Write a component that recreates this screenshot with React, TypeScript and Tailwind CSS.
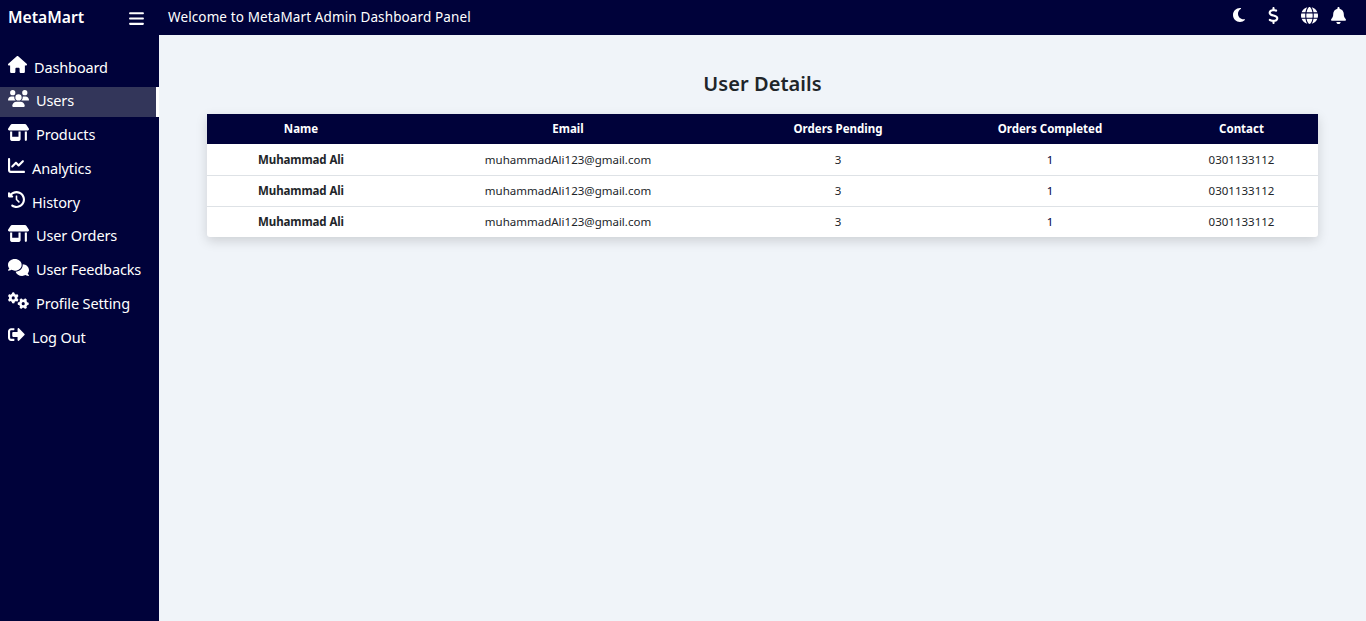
import { FaHouse, FaUsers, FaShop, FaChartLine, FaClockRotateLeft, FaComments, FaGears, FaMoon, FaDollarSign, FaGlobe, FaBell, FaBars } from "react-icons/fa6";
import { FaSignOutAlt } from "react-icons/fa";

const nav = [
  { label: "Dashboard", Icon: FaHouse, size: 19, gap: "gap-[7px]" },
  { label: "Users", Icon: FaUsers, size: 21, gap: "gap-[7px]", active: true },
  { label: "Products", Icon: FaShop, size: 21, gap: "gap-[7px]" },
  { label: "Analytics", Icon: FaChartLine, size: 17, gap: "gap-[7px]" },
  { label: "History", Icon: FaClockRotateLeft, size: 17, gap: "gap-[7px]" },
  { label: "User Orders", Icon: FaShop, size: 21, gap: "gap-[7px]" },
  { label: "User Feedbacks", Icon: FaComments, size: 21, gap: "gap-[7px]" },
  { label: "Profile Setting", Icon: FaGears, size: 21, gap: "gap-[7px]" },
  { label: "Log Out", Icon: FaSignOutAlt, size: 17, gap: "gap-[7px]" },
];

const rows = [0, 1, 2];

export default function App() {
  return (
    <div className="flex h-[621px] w-[1366px] overflow-hidden bg-[#f0f4f9] font-['Noto_Sans',sans-serif] text-[#212529]">
      <aside className="flex h-full w-[159px] shrink-0 flex-col bg-[#00023a] text-white">
        <div className="flex h-[36px] items-center justify-between pl-2 pr-[14px]">
          <span className="text-[15.7px] font-semibold">MetaMart</span>
          <FaBars size={17} />
        </div>
        <nav className="mt-[17px] flex flex-col">
          {nav.map(({ label, Icon, size, gap, active }) => (
            <div
              key={label}
              className={`mb-[3.75px] flex h-[30px] items-center pl-2 ${gap} ${active ? "border-r-[3px] border-white bg-[#33365a]" : ""}`}
            >
              <span className="-mt-[7px] flex shrink-0 justify-start">
                <Icon size={size} />
              </span>
              <span className="-mt-[1px] text-[14.5px] tracking-[-0.13px]">{label}</span>
            </div>
          ))}
        </nav>
      </aside>
      <main className="flex min-w-0 flex-1 flex-col">
        <header className="flex h-[35px] shrink-0 items-center justify-between bg-[#00023a] pl-[9px] text-white">
          <span className="-mt-[1px] text-[13.5px] tracking-[0.12px]">Welcome to MetaMart Admin Dashboard Panel</span>
          <div className="-mt-[5px] h-[35px] w-[136px]">
            <div className="flex h-full items-center">
              <FaMoon size={16} className="ml-[1px]" />
              <FaDollarSign size={17} className="ml-[18px]" />
              <FaGlobe size={17} className="ml-[19px]" />
              <FaBell size={17} className="ml-[12px]" />
            </div>
          </div>
        </header>
        <section className="px-12 pt-[34px]">
          <h1 className="mb-[16px] h-[29px] text-center text-[20px] leading-[29px] font-semibold tracking-[0.05px]">User Details</h1>
          <div className="w-[1111px] overflow-hidden rounded-b-[3px] bg-white shadow-[0_4px_12px_rgba(0,0,0,0.15)]">
            <table className="w-full table-fixed border-collapse text-center text-[11.5px]">
              <colgroup>
                <col className="w-[188px]" />
                <col className="w-[346px]" />
                <col className="w-[194px]" />
                <col className="w-[230px]" />
                <col className="w-[153px]" />
              </colgroup>
              <thead>
                <tr className="h-[30px] bg-[#00023a] text-white">
                  <th className="font-bold">Name</th>
                  <th className="font-bold">Email</th>
                  <th className="font-bold">Orders Pending</th>
                  <th className="font-bold">Orders Completed</th>
                  <th className="font-bold">Contact</th>
                </tr>
              </thead>
              <tbody>
                {rows.map((r) => (
                  <tr key={r} className={`h-[31px] ${r < 2 ? "border-b border-[#dee2e6]" : ""}`}>
                    <td className="font-bold tracking-[-0.1px]">Muhammad Ali</td>
                    <td>muhammadAli123@gmail.com</td>
                    <td>3</td>
                    <td className="text-[#00023a]">1</td>
                    <td>0301133112</td>
                  </tr>
                ))}
              </tbody>
            </table>
          </div>
        </section>
      </main>
    </div>
  );
}
